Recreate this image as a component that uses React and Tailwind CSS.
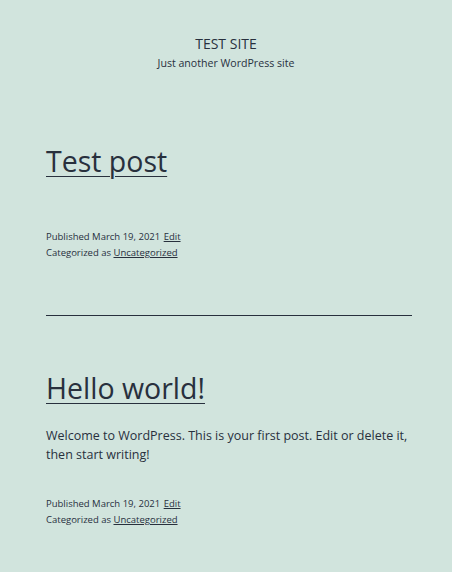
export default function App() {
  return (
    <div className="min-h-screen bg-[#d1e4dd] text-[#28303d] font-['Open_Sans',sans-serif]">
      {/* Site header */}
      <header className="pt-[34px] text-center">
        <p className="text-[14px] leading-[20px] uppercase">Test Site</p>
        <p className="text-[10.6px] leading-[16px] mt-[1px]">Just another WordPress site</p>
      </header>

      <main className="pl-[46px] pr-[40px]">
        {/* Post 1 */}
        <article className="pt-[70px]">
          <h2 className="text-[28.5px] leading-[40px] font-normal">
            <a href="#" className="underline decoration-1 underline-offset-[4px]">Test post</a>
          </h2>
          <div className="mt-[48px] text-[9.5px] leading-[16px]">
            <p>Published March 19, 2021 <a href="#" className="ml-[1px] underline">Edit</a></p>
            <p>Categorized as <a href="#" className="underline">Uncategorized</a></p>
          </div>
        </article>

        <hr className="mt-[54px] border-0 border-t border-[#28303d]" />

        {/* Post 2 */}
        <article className="pt-[52px]">
          <h2 className="text-[28.5px] leading-[40px] font-normal">
            <a href="#" className="underline decoration-1 underline-offset-[4px]">Hello world!</a>
          </h2>
          <p className="mt-[18px] text-[12.5px] leading-[19px]">
            Welcome to WordPress. This is your first post. Edit or delete it, then start writing!
          </p>
          <div className="mt-[32px] text-[9.5px] leading-[16px]">
            <p>Published March 19, 2021 <a href="#" className="ml-[1px] underline">Edit</a></p>
            <p>Categorized as <a href="#" className="underline">Uncategorized</a></p>
          </div>
        </article>
      </main>
    </div>
  );
}
